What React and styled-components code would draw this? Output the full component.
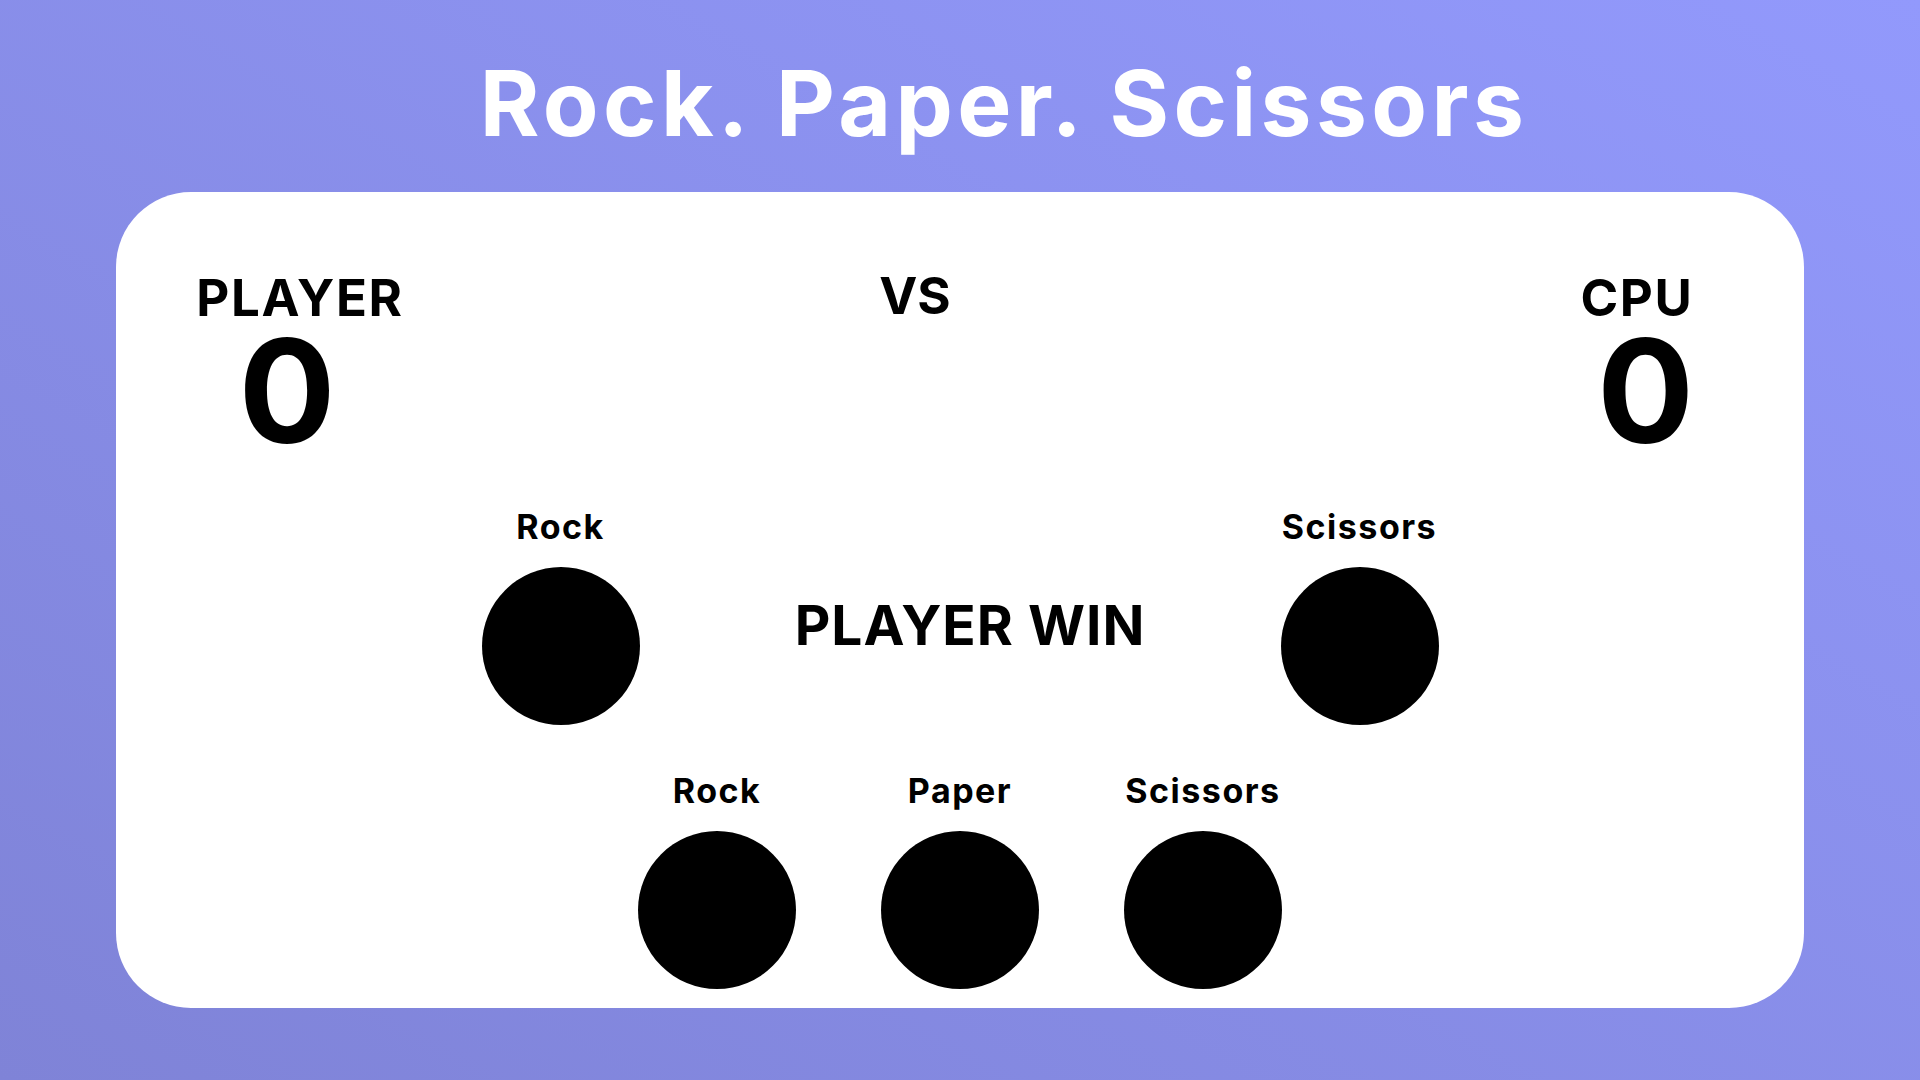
import React, { useState } from "react";
import styled, { createGlobalStyle } from "styled-components";

const GlobalStyle = createGlobalStyle`
  * {
    box-sizing: border-box;
  }
  body {
    margin: 0;
    font-family: Inter, "Liberation Sans", sans-serif;
  }
`;

const choices = ["Rock", "Paper", "Scissors"];

const App = () => {
  const [playerScore] = useState(0);
  const [cpuScore] = useState(0);
  const [playerPick] = useState("Rock");
  const [cpuPick] = useState("Scissors");
  const [result] = useState("PLAYER WIN");

  return (
    <Page>
      <GlobalStyle />
      <Title>Rock. Paper. Scissors</Title>
      <Card>
        <Header>
          <ScoreBlock>
            <ScoreLabel>PLAYER</ScoreLabel>
            <Score $nudge={-26}>{playerScore}</Score>
          </ScoreBlock>
          <Versus>VS</Versus>
          <ScoreBlock $end>
            <ScoreLabel>CPU</ScoreLabel>
            <Score $nudge={17}>{cpuScore}</Score>
          </ScoreBlock>
        </Header>

        <Battle>
          <Pick>
            <PickLabel>{playerPick}</PickLabel>
            <Hand aria-label={playerPick} />
          </Pick>
          <Result>{result}</Result>
          <Pick>
            <PickLabel>{cpuPick}</PickLabel>
            <Hand aria-label={cpuPick} />
          </Pick>
        </Battle>

        <Choices>
          {choices.map((c) => (
            <Pick key={c}>
              <PickLabel>{c}</PickLabel>
              <Hand as="button" aria-label={c} />
            </Pick>
          ))}
        </Choices>
      </Card>
    </Page>
  );
};

export default App;

const Page = styled.div`
  min-height: 100vh;
  display: flex;
  flex-direction: column;
  align-items: center;
  padding-top: 58px;
  background: linear-gradient(to top right, #7f83d7, #9299fc);
`;

const Title = styled.h1`
  margin: 0 0 43px;
  padding-left: 88px;
  font-size: 91px;
  line-height: 1;
  font-weight: 700;
  letter-spacing: 4.4px;
  color: #ffffff;
`;

const Card = styled.div`
  width: 1688px;
  height: 816px;
  background: #ffffff;
  border-radius: 75px;
  padding: 80px 0 0;
  display: flex;
  flex-direction: column;
`;

const Header = styled.div`
  display: grid;
  grid-template-columns: 368px 862px 1fr;
  align-items: start;
`;

const ScoreBlock = styled.div`
  display: flex;
  flex-direction: column;
  align-items: center;
  ${(p) => p.$end && "width: 334px; justify-self: end;"}
`;

const ScoreLabel = styled.div`
  font-size: 51px;
  line-height: 1;
  font-weight: 700;
  letter-spacing: 1.6px;
  color: #000;
`;

const Score = styled.div`
  font-size: 144px;
  line-height: 0.94;
  font-weight: 700;
  color: #000;
  ${(p) =>
    p.$nudge < 0
      ? `margin-right: ${-p.$nudge}px;`
      : `margin-left: ${p.$nudge}px;`}
`;

const Versus = styled.div`
  justify-self: center;
  margin-top: -2px;
  font-size: 51px;
  line-height: 1;
  font-weight: 700;
  color: #000;
`;

const Battle = styled.div`
  width: 957px;
  margin: 52px auto 0;
  display: grid;
  grid-template-columns: 158px 1fr 158px;
  align-items: center;
`;

const Result = styled.div`
  padding-left: 20px;
  text-align: center;
  font-size: 55px;
  line-height: 1;
  font-weight: 700;
  letter-spacing: 1px;
  color: #000;
  margin-top: 16px;
`;

const Choices = styled.div`
  margin-top: 49px;
  display: flex;
  justify-content: center;
  gap: 85px;
`;

const Pick = styled.div`
  width: 158px;
  display: flex;
  flex-direction: column;
  align-items: center;
  gap: 23px;
`;

const PickLabel = styled.div`
  font-size: 34px;
  line-height: 1;
  font-weight: 700;
  letter-spacing: 1.5px;
  color: #000;
  white-space: nowrap;
`;

const Hand = styled.div`
  width: 158px;
  height: 158px;
  border-radius: 50%;
  background: #000;
  border: none;
  padding: 0;
  cursor: pointer;
`;
